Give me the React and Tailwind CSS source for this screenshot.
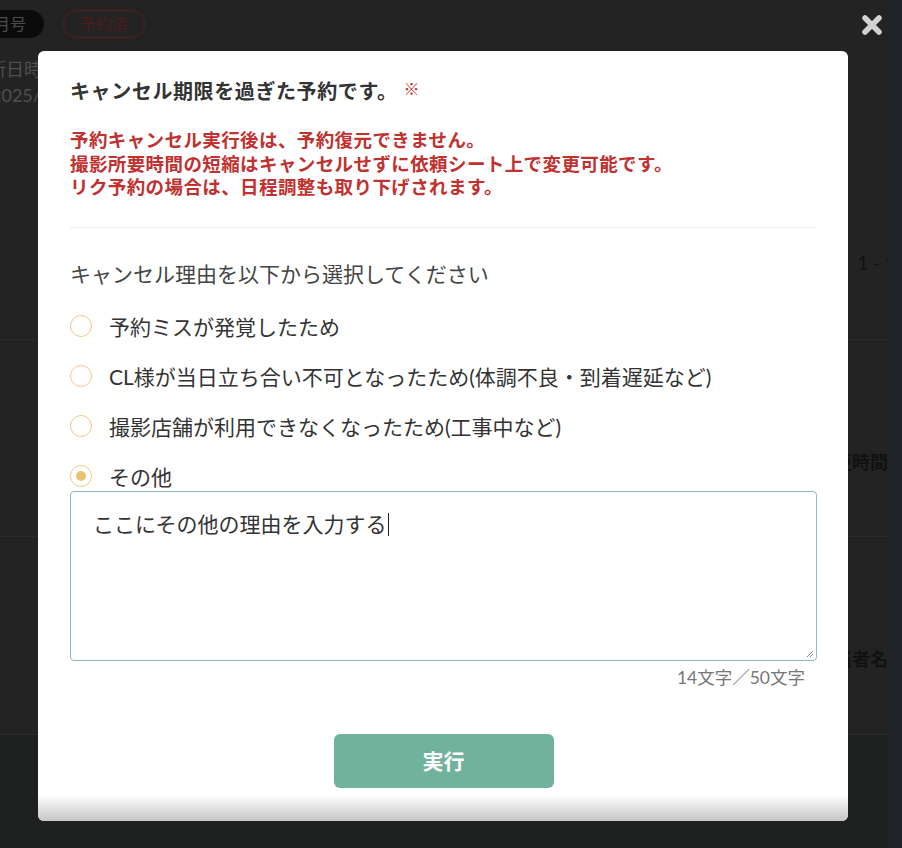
const reasons = [
  { label: '予約ミスが発覚したため', checked: false },
  { label: 'CL様が当日立ち合い不可となったため(体調不良・到着遅延など)', checked: false },
  { label: '撮影店舗が利用できなくなったため(工事中など)', checked: false },
  { label: 'その他', checked: true },
]

function Radio({ checked }) {
  return (
    <span className="flex h-[22px] w-[22px] shrink-0 items-center justify-center rounded-full border-[1.5px] border-[#efcb86] bg-white">
      {checked && <span className="h-[10px] w-[10px] rounded-full bg-[#e9c275]" />}
    </span>
  )
}

function BackgroundPage() {
  return (
    <div className="flex h-full w-full">
      <div className="flex flex-1 flex-col">
        <div className="flex h-[46px] items-center gap-[19px] pt-[1px]">
          <span className="-ml-[24px] rounded-full bg-[#0b0b0b] pl-[2px] pr-[18px] text-[16px] leading-[28px] text-[#4d4d4d]">年月号</span>
          <span className="rounded-full border border-[#561f1f] px-[16px] text-[16px] leading-[26px] text-[#4a1c1c]">予約済</span>
        </div>
        <div className="-ml-[30px] mt-[10px] flex flex-col text-[18px] leading-[26px] text-[#4f4f4f]">
          <span>更新日時</span>
          <span className="ml-[21px]">2025/</span>
        </div>
        <div className="mt-auto" />
        <div className="flex h-[228px] items-end justify-end border-b border-[#2b2b2b] pb-[62px] text-[19px] text-[#111]">
          <span className="-mr-[8px]">1 - 1</span>
        </div>
        <div className="flex h-[197px] items-center justify-end border-b border-[#2b2b2b] pt-[48px] text-[18px] font-bold text-[#111]">
          <span>変更時間</span>
        </div>
        <div className="flex h-[198px] items-center justify-end border-b border-[#2b2b2b] pt-[48px] text-[18px] font-bold text-[#111]">
          <span>担当者名</span>
        </div>
        <div className="h-[113px] bg-[#1f2020]" />
      </div>
      <div className="w-[14px] bg-[#202428]" />
    </div>
  )
}

export default function App() {
  return (
    <div
      className="relative h-[848px] w-[902px] overflow-hidden bg-[#232323]"
      style={{ fontFamily: 'Lato, "Noto Sans CJK JP", sans-serif' }}
    >
      <BackgroundPage />

      <button className="absolute left-[861px] top-[14px] h-[22px] w-[22px]">
        <svg viewBox="0 0 22 22" className="h-[22px] w-[22px]">
          <path d="M4 4 L18 18 M18 4 L4 18" stroke="#d2d2d2" strokeWidth="5.5" strokeLinecap="round" />
        </svg>
      </button>

      <div className="absolute left-[38px] top-[51px] h-[770px] w-[810px] overflow-hidden rounded-[6px] bg-white">
        <div className="flex flex-col pl-[32px] pr-[31px] pt-[27px]">
          <h2 className="text-[20px] font-bold leading-[27px] tracking-[0.6px] text-[#333]">
            キャンセル期限を過ぎた予約です。
            <span className="relative -top-[4px] ml-[6px] text-[16px] font-bold text-[#c5302f]">※</span>
          </h2>

          <div className="mt-[23px] text-[18.5px] font-bold leading-[23.5px] tracking-[0.4px] text-[#c0312f]">
            <p>予約キャンセル実行後は、予約復元できません。</p>
            <p>撮影所要時間の短縮はキャンセルせずに依頼シート上で変更可能です。</p>
            <p>リク予約の場合は、日程調整も取り下げされます。</p>
          </div>

          <hr className="mt-[27px] border-[#ececec]" />

          <p className="mt-[32px] text-[21px] leading-[27px] text-[#444]">キャンセル理由を以下から選択してください</p>

          <div className="mt-[26px] flex flex-col gap-[23px]">
            {reasons.map((r) => (
              <label key={r.label} className="flex items-center gap-[17px] text-[21px] leading-[27px] text-[#333]">
                <Radio checked={r.checked} />
                <span>{r.label}</span>
              </label>
            ))}
          </div>

          <div className="relative mt-[1px] h-[170px] rounded-[4px] border border-[#8db6d6] px-[22px] pt-[17px]">
            <p className="text-[21px] leading-[27px] text-[#333]">
              ここにその他の理由を入力する
              <span className="ml-[1px] inline-block h-[23px] w-[1px] translate-y-[4px] bg-[#222]" />
            </p>
            <svg viewBox="0 0 10 10" className="absolute bottom-[2px] right-[2px] h-[10px] w-[10px]">
              <path d="M9 3 L3 9 M9 6 L6 9" stroke="#888" strokeWidth="1" />
            </svg>
          </div>

          <p className="mt-[5px] pr-[12px] text-right text-[17.5px] leading-[24px] text-[#777]">14文字／50文字</p>

          <div className="mt-[44px] flex justify-center">
            <button className="h-[54px] w-[220px] rounded-[6px] bg-[#70b29b] text-[21px] font-bold text-white">実行</button>
          </div>
        </div>

        <div className="absolute bottom-0 left-0 h-[26px] w-full bg-gradient-to-b from-white to-[#c6c6c6]" />
      </div>
    </div>
  )
}
